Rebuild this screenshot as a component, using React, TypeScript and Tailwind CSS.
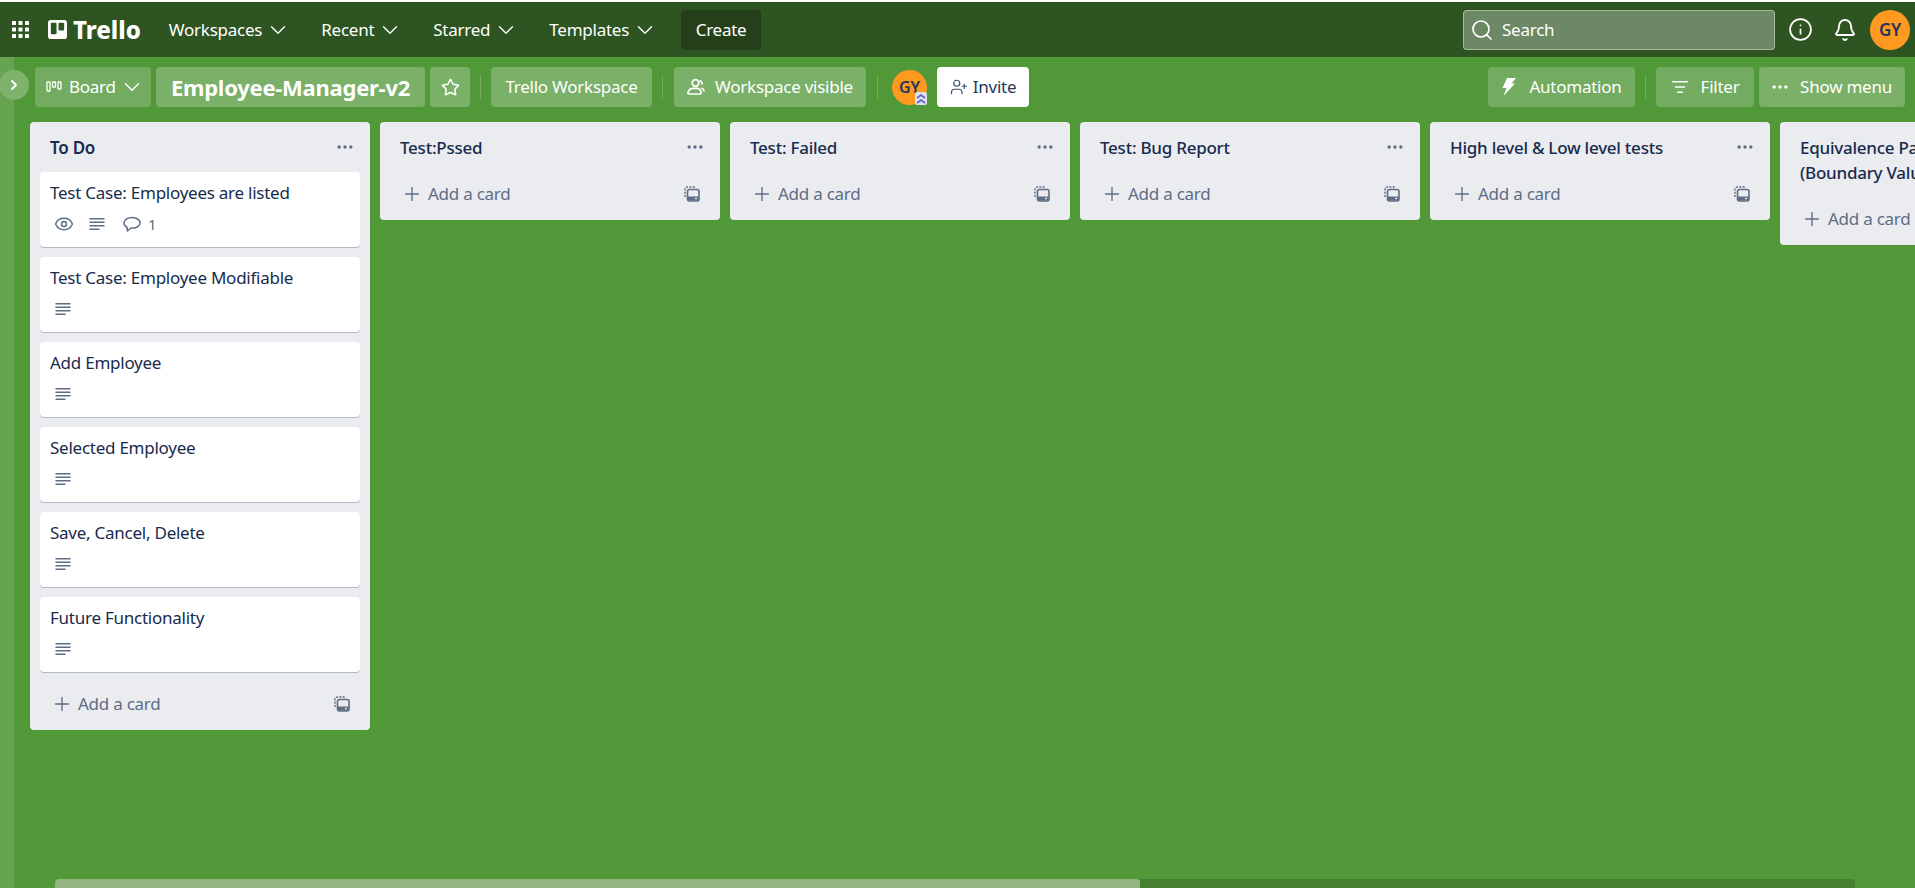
import { Bell, ChevronDown, ChevronRight, Ellipsis, Eye, Info, ListFilter, Plus, Search, Star, UserPlus } from "lucide-react";

const font = "font-['Noto_Sans',sans-serif] tracking-[-0.25px]";

const navItems = ["Workspaces", "Recent", "Starred", "Templates"];

const todoCards = [
  { title: "Test Case: Employees are listed", watched: true, comments: 1 },
  { title: "Test Case: Employee Modifiable" },
  { title: "Add Employee" },
  { title: "Selected Employee" },
  { title: "Save, Cancel, Delete" },
  { title: "Future Functionality" },
];

const otherLists = ["Test:Pssed", "Test: Failed", "Test: Bug Report", "High level & Low level tests"];

function DescriptionIcon() {
  return (
    <svg width="16" height="14" viewBox="0 0 16 14" fill="#5e6c84">
      <rect x="0.5" y="1" width="15" height="1.5" />
      <rect x="0.5" y="4.5" width="15" height="1.5" />
      <rect x="0.5" y="8" width="15" height="1.5" />
      <rect x="0.5" y="11.5" width="10" height="1.5" />
    </svg>
  );
}

function CommentIcon() {
  return (
    <svg width="18" height="17" viewBox="0 0 18 17" fill="none" stroke="#5e6c84" strokeWidth="1.5" strokeLinejoin="round">
      <path d="M9.500 1.500C5 1.500 1 3.600 1 7c0 2 1.300 3.400 3 4.200l.4 3.800 3.600-3c.5.1 1 .1 1.500.1 4.400 0 7.500-2.200 7.500-5.100S13.900 1.500 9.500 1.500z" />
    </svg>
  );
}

function TemplateIcon() {
  return (
    <svg width="16" height="16" viewBox="0 0 16 16" fill="none" stroke="#5e6c84">
      <path d="M1 11V3.500C1 2 2 1 3.500 1H12" strokeWidth="1.4" strokeDasharray="2 1.3" />
      <rect x="3.5" y="3.5" width="11.5" height="11.5" rx="2" strokeWidth="1.6" />
      <rect x="4" y="10.5" width="10.5" height="4" fill="#5e6c84" stroke="none" />
      <rect x="11" y="11.8" width="2" height="1.4" fill="#ebecf0" stroke="none" />
    </svg>
  );
}

function GridIcon() {
  return (
    <svg width="17" height="17" viewBox="0 0 17 17" fill="#fff">
      {[0, 6.5, 13].flatMap((y) =>
        [0, 6.5, 13].map((x) => <rect key={`${x}-${y}`} x={x} y={y} width="4" height="4" rx="0.6" />),
      )}
    </svg>
  );
}

function BoardIcon() {
  return (
    <svg width="16" height="14" viewBox="0 0 16 14" fill="none" stroke="#fff" strokeWidth="1.3">
      <rect x="1" y="2" width="3" height="9" rx="0.6" />
      <rect x="6.5" y="2" width="3" height="5" rx="0.6" />
      <rect x="12" y="2" width="3" height="7" rx="0.6" />
    </svg>
  );
}

function WorkspaceIcon() {
  return (
    <svg width="18" height="18" viewBox="0 0 18 18" fill="none" stroke="#fff" strokeWidth="1.7" strokeLinejoin="round">
      <circle cx="8.5" cy="5" r="3.3" />
      <path d="M2 16c-.8 0-1.200-.7-1-1.400.7-2.400 2.700-4.200 5-4.200h4.200c2 0 3.500 1.600 3.800 4.200.1.800-.4 1.400-1.100 1.400z" />
      <path d="M12.500 2.800c2 .3 3 2 2.400 3.800M14.600 10c1.500.7 2.400 2 2.400 3.500" />
    </svg>
  );
}

function BoltIcon() {
  return (
    <svg width="16" height="20" viewBox="0 0 16 20" fill="#fff">
      <path d="M6 1h9l-4.500 5.500H14L2.500 19l3-8H1.500z" />
    </svg>
  );
}

function Avatar({ size }: { size: "sm" | "lg" }) {
  return (
    <div className={`flex shrink-0 items-center justify-center rounded-full bg-[#ff991f] font-semibold text-[#253858] ${size === "lg" ? "h-10 w-10 text-[17px]" : "h-[35px] w-[35px] text-[16px]"}`}>
      GY
    </div>
  );
}

function AddCardRow() {
  return (
    <div className="flex h-12 items-center justify-between pb-[5px] pl-[21px] pr-[20px] text-[#5e6c84]">
      <div className="flex items-center gap-[5px]">
        <Plus size={22} strokeWidth={1.5} />
        <span className="text-[17px]">Add a card</span>
      </div>
      <TemplateIcon />
    </div>
  );
}

function ListHeader({ title, bold = false }: { title: string; bold?: boolean }) {
  return (
    <div className="flex min-h-[50px] items-start justify-between pb-[12px] pl-5 pr-[15px] pt-[13px]">
      <h2 className={`whitespace-pre-line text-[17px] leading-[25px] text-[#172b4d] ${bold ? "font-semibold" : "font-medium"}`}>{title}</h2>
      <Ellipsis size={20} className="mt-[2px] shrink-0 text-[#5e6c84]" />
    </div>
  );
}

function Card({ title, watched, comments }: { title: string; watched?: boolean; comments?: number }) {
  return (
    <div className="h-[75px] rounded-[4px] bg-white px-[10px] pt-[8px] shadow-[0_1px_0_#091e4240]">
      <div className="text-[17px] leading-[25px] text-[#172b4d]">{title}</div>
      <div className="mt-[8px] flex h-[22px] items-center pl-[5px] text-[#5e6c84]">
        {watched && <Eye size={20} strokeWidth={1.7} className="-ml-[1px] mr-[15px]" />}
        <DescriptionIcon />
        {comments && (
          <>
            <div className="ml-[18px] mr-[7px] flex">
              <CommentIcon />
            </div>
            <span className="text-[15px]">{comments}</span>
          </>
        )}
      </div>
    </div>
  );
}

function BarButton({ children, className = "" }: { children: React.ReactNode; className?: string }) {
  return (
    <div className={`flex h-10 shrink-0 items-center rounded-[4px] text-[17px] text-white ${className}`}>
      {children}
    </div>
  );
}

export default function App() {
  return (
    <div className={`${font} relative flex h-[888px] w-[1915px] flex-col overflow-hidden bg-[#519839]`}>
      <div className="h-[2px] shrink-0 bg-white" />

      {/* top nav */}
      <header className="flex h-[55px] shrink-0 items-center bg-[#2d5421] pl-[12px] pr-[5px] text-white">
        <GridIcon />
        <div className="ml-[19px] flex items-center gap-[6px]">
          <svg width="19" height="19" viewBox="0 0 20 20">
            <rect width="20" height="20" rx="3" fill="#fff" />
            <rect x="3" y="3" width="6" height="12" rx="1" fill="#2d5421" />
            <rect x="11" y="3" width="6" height="8" rx="1" fill="#2d5421" />
          </svg>
          <span className="text-[24px] font-extrabold leading-none tracking-normal">Trello</span>
        </div>
        <nav className="ml-[28px] flex items-center gap-[30px]">
          {navItems.map((item) => (
            <div key={item} className="flex items-center gap-[3px] text-[17px]">
              {item}
              <ChevronDown size={26} strokeWidth={1.3} />
            </div>
          ))}
        </nav>
        <div className="ml-[23px] flex h-10 w-20 items-center justify-center rounded-[4px] bg-[#243f1a] text-[17px]">Create</div>
        <div className="ml-auto flex h-10 w-[312px] items-center gap-[8px] rounded-[4px] border border-[#ffffff66] bg-[#6d8864] pl-[6px] text-[17px]">
          <Search size={24} strokeWidth={1.7} />
          Search
        </div>
        <Info size={25} strokeWidth={1.7} className="ml-[13px]" />
        <Bell size={24} strokeWidth={1.8} className="ml-[20px]" />
        <div className="ml-[13px]">
          <Avatar size="lg" />
        </div>
      </header>

      {/* board bar */}
      <div className="flex h-[65px] shrink-0 items-center pb-[5px] pl-[35px] pr-[10px] text-white">
        <BarButton className="w-[116px] bg-[#ffffff33] pl-[11px]">
          <BoardIcon />
          <span className="ml-[7px]">Board</span>
          <ChevronDown size={26} strokeWidth={1.3} className="ml-[3px]" />
        </BarButton>
        <BarButton className="ml-[5px] w-[269px] justify-center bg-[#ffffff3d] !text-[22px] font-bold">Employee-Manager-v2</BarButton>
        <BarButton className="ml-[5px] w-10 justify-center bg-[#ffffff3d]">
          <Star size={19} strokeWidth={2} />
        </BarButton>
        <div className="mx-[10px] h-6 w-px bg-[#ffffff33]" />
        <BarButton className="w-[161px] justify-center bg-[#ffffff3d]">Trello Workspace</BarButton>
        <div className="ml-[10px] mr-[11px] h-6 w-px bg-[#ffffff33]" />
        <BarButton className="w-[192px] justify-center gap-[10px] bg-[#ffffff3d]">
          <WorkspaceIcon />
          Workspace visible
        </BarButton>
        <div className="mx-[11px] h-6 w-px bg-[#ffffff33]" />
        <div className="relative ml-[3px]">
          <Avatar size="sm" />
          <svg className="absolute bottom-0 right-0 rounded-[2px] bg-[#dfe1e6]" width="12" height="13" viewBox="0 0 12 13" fill="none" stroke="#5a5fd6" strokeWidth="1.6">
            <path d="M2 6l4-3 4 3M2 11l4-3 4 3" />
          </svg>
        </div>
        <div className="ml-[10px] flex h-10 w-[92px] items-center justify-center gap-[5px] rounded-[4px] bg-white text-[17px] text-[#253858]">
          <UserPlus size={18} strokeWidth={1.6} className="text-[#42526e]" />
          Invite
        </div>
        <BarButton className="ml-auto w-[147px] justify-center gap-[12px] bg-[#ffffff33]">
          <BoltIcon />
          Automation
        </BarButton>
        <div className="mx-[10px] h-6 w-px bg-[#ffffff33]" />
        <BarButton className="w-[98px] justify-center gap-[12px] bg-[#ffffff33]">
          <ListFilter size={18} strokeWidth={1.8} />
          Filter
        </BarButton>
        <BarButton className="ml-[5px] w-[146px] justify-center gap-[10px] bg-[#ffffff3d] pr-[2px]">
          <Ellipsis size={20} />
          Show menu
        </BarButton>
      </div>

      {/* sidebar strip and expand button */}
      <div className="absolute bottom-0 left-0 top-[57px] w-[14px] bg-[#ffffff1f]" />
      <div className="absolute -left-[1px] top-[70px] flex h-[30px] w-[30px] items-center justify-center rounded-full bg-[#7fb26d] text-white">
        <ChevronRight size={16} strokeWidth={3} />
      </div>

      {/* lists */}
      <main className="flex flex-1 items-start gap-[10px] overflow-hidden pl-[30px]">
        <section className="w-[340px] shrink-0 rounded-[4px] bg-[#ebecf0]">
          <ListHeader title="To Do" bold />
          <div className="flex flex-col gap-[10px] px-[10px] pb-[10px]">
            {todoCards.map((card) => (
              <Card key={card.title} {...card} />
            ))}
          </div>
          <AddCardRow />
        </section>
        {otherLists.map((title) => (
          <section key={title} className="w-[340px] shrink-0 rounded-[4px] bg-[#ebecf0]">
            <ListHeader title={title} />
            <AddCardRow />
          </section>
        ))}
        <section className="w-[340px] shrink-0 rounded-[4px] bg-[#ebecf0]">
          <ListHeader title={"Equivalence Partitioning\n(Boundary Value Analysis)"} />
          <AddCardRow />
        </section>
      </main>

      {/* board scrollbar */}
      <div className="absolute bottom-0 left-[55px] flex h-[9px] w-[1800px] overflow-hidden rounded-t-[3px] bg-[#457f30]">
        <div className="w-[1085px] rounded-t-[3px] bg-[#92b581]" />
      </div>
    </div>
  );
}
